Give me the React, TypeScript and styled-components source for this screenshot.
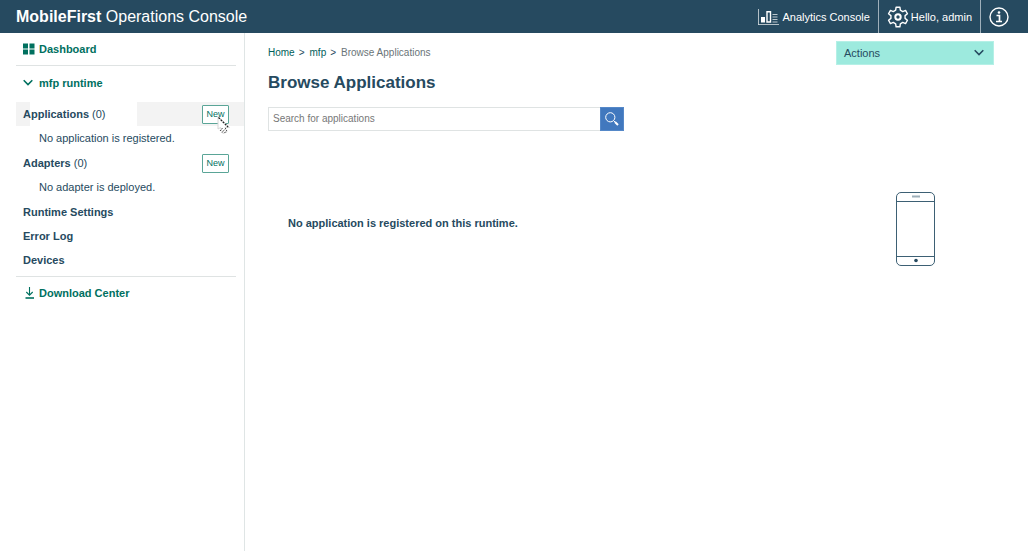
import React from "react";
import styled, { createGlobalStyle } from "styled-components";

const GlobalStyle = createGlobalStyle`
  *, *::before, *::after { box-sizing: border-box; }
  body {
    margin: 0;
    background: #fff;
    color: #264a60;
    font: 11px/16px "Liberation Sans", Arial, sans-serif;
  }
  h1, h2, p, ul, ol { margin: 0; padding: 0; }
  ul, ol { list-style: none; }
  a { color: inherit; text-decoration: none; }
  button, input { font: inherit; }
  svg { display: block; flex: none; }
`;

const Page = styled.div`
  display: flex;
  flex-direction: column;
  min-height: 100vh;
`;

const Header = styled.header`
  display: flex;
  align-items: center;
  height: 33px;
  padding-left: 16px;
  background: #264a60;
  color: #fff;
`;

const Brand = styled.h1`
  flex: 1;
  font-size: 16px;
  line-height: 32px;
  font-weight: 400;
  white-space: nowrap;
`;

const HeaderLink = styled.a<{ $divided?: boolean }>`
  display: flex;
  align-items: center;
  gap: 2px;
  height: 33px;
  padding: 0 8px;
  border-left: ${(p) => (p.$divided ? "1px solid #9fb0bb" : "0")};
  white-space: nowrap;
  &:last-child { padding-right: 19px; }
`;

const Body = styled.div`
  display: flex;
  flex: 1;
`;

const Sidebar = styled.nav`
  flex: none;
  width: 245px;
  padding-left: 16px;
  border-right: 1px solid #dfe5e5;
`;

const Section = styled.a<{ $ruled?: "top" | "bottom" }>`
  display: flex;
  align-items: center;
  gap: 4px;
  height: 33px;
  margin-right: 8px;
  padding-left: 7px;
  border-top: ${(p) => (p.$ruled === "top" ? "1px solid #dfe3e3" : "0")};
  border-bottom: ${(p) => (p.$ruled === "bottom" ? "1px solid #dfe3e3" : "0")};
  color: #00705f;
  font-weight: 700;
`;

const Menu = styled.ul`
  padding: 3px 0 4px;
`;

const MenuRow = styled.li<{ $active?: boolean }>`
  display: flex;
  align-items: center;
  justify-content: space-between;
  height: 24px;
  padding: 0 15px 0 7px;
  background: ${(p) =>
    p.$active
      ? "linear-gradient(90deg, #f3f3f3 14px, #fff 14px 121px, #f3f3f3 121px)"
      : "none"};
`;

const MenuNote = styled.li`
  height: 25px;
  padding-left: 23px;
  line-height: 25px;
`;

const NewSlot = styled.span`
  position: relative;
`;

const NewButton = styled.button`
  display: block;
  width: 27px;
  height: 19px;
  padding: 0;
  border: 1px solid #5aa597;
  border-radius: 1px;
  background: #fff;
  color: #00705f;
  font-size: 9px;
`;

const Pointer = styled.svg`
  position: absolute;
  left: 15px;
  top: 11px;
`;

const Main = styled.main`
  flex: 1;
  min-width: 0;
  padding: 8px 34px 0 23px;
`;

const TopRow = styled.div`
  display: flex;
  justify-content: space-between;
  align-items: center;
`;

const Crumbs = styled.ol`
  display: flex;
  gap: 5px;
  font-size: 10px;
`;

const Crumb = styled.li`
  color: #6a7478;
  a { color: #00605a; }
  span { margin-left: 4px; color: #264a60; }
`;

const Actions = styled.button`
  display: flex;
  align-items: center;
  justify-content: space-between;
  width: 158px;
  height: 24px;
  padding: 0 7px;
  border: 1px solid #b5f0e6;
  background: #9deade;
  color: #264a60;
`;

const Title = styled.h2`
  margin-top: 6px;
  font-size: 17px;
  line-height: 24px;
`;

const Search = styled.form`
  display: flex;
  max-width: 356px;
  height: 24px;
  margin-top: 12px;
`;

const SearchInput = styled.input`
  flex: 1;
  min-width: 0;
  padding: 0 4px;
  border: 1px solid #dfe3e3;
  border-right: 0;
  border-radius: 0;
  font-size: 10px;
  &::placeholder { color: #777; opacity: 1; }
`;

const SearchButton = styled.button`
  display: grid;
  place-items: center;
  width: 24px;
  padding: 0;
  border: 1px solid #5588c8;
  background: #4178be;
`;

const Empty = styled.section`
  display: flex;
  align-items: center;
  justify-content: space-between;
  margin-top: 60px;
  padding: 0 58px 0 20px;
`;

const EmptyText = styled.p`
  padding-bottom: 12px;
  font-weight: 700;
`;

const Chevron = () => (
  <svg width="12" height="12" viewBox="0 0 12 12" fill="none" stroke="currentColor" strokeWidth="1.6" aria-hidden="true">
    <path d="M0.7 3.2 5 7.5l4.300-4.300" />
  </svg>
);

const DashboardIcon = () => (
  <svg width="12" height="12" viewBox="0 0 12 12" fill="currentColor" aria-hidden="true">
    <path d="M0 0.5h5v5H0zM6.5 0.5h5v5h-5zM0 6.5h5v5H0zM6.5 6.5h5v5h-5z" />
  </svg>
);

const DownloadIcon = () => (
  <svg width="12" height="12" viewBox="0 0 12 12" fill="none" stroke="currentColor" aria-hidden="true">
    <path d="M6.500 0v8M3.300 5l3.200 3.200L9.700 5" strokeWidth="1.1" />
    <path d="M2.500 11h8.500" strokeWidth="1.600" />
  </svg>
);

const AnalyticsIcon = () => (
  <svg width="22" height="16" viewBox="0 0 22 16" fill="none" stroke="#fff" aria-hidden="true">
    <path d="M0.5 0v15.5M0 15.5h21" opacity=".65" />
    <path d="M3 8h4v5.500H3z" fill="#fff" stroke="none" />
    <path d="M9 2.700h3.500v10.300H9z" strokeWidth="1.400" />
    <path d="M14.500 5.500h5M14.500 8h5M14.500 10.500h5M14.500 13h5" opacity=".7" />
  </svg>
);

const gear = Array.from({ length: 24 }, (_, i) => {
  const tooth = Math.floor(i / 4);
  const r = i % 4 < 2 ? 10 : 7.2;
  const offset = [-11, 11, 19, 41][i % 4];
  const a = ((tooth * 60 + offset - 90) * Math.PI) / 180;
  return `${(11 + r * Math.cos(a)).toFixed(2)},${(11 + r * Math.sin(a)).toFixed(2)}`;
}).join(" ");

const GearIcon = () => (
  <svg width="22" height="22" viewBox="0 0 22 22" fill="none" stroke="#fff" strokeLinejoin="round" aria-hidden="true">
    <polygon points={gear} strokeWidth="1.4" />
    <circle cx="11" cy="11" r="2.700" strokeWidth="2" />
  </svg>
);

const InfoIcon = () => (
  <svg width="20" height="20" viewBox="0 0 20 20" fill="none" stroke="#fff" aria-hidden="true">
    <circle cx="10" cy="10" r="9" strokeWidth="1.4" />
    <path d="M7.500 8.500H10.500v6M7 14.500h6" strokeWidth="1.700" />
    <circle cx="10" cy="5.500" r="1.300" fill="#fff" stroke="none" />
  </svg>
);

const SearchIcon = () => (
  <svg width="14" height="14" viewBox="0 0 14 14" fill="none" stroke="#fff" aria-hidden="true">
    <circle cx="5.300" cy="5.300" r="4.600" />
    <path d="m8.600 8.600 1.600 1.600" />
    <path d="m10 10 3 3" strokeWidth="2" />
  </svg>
);

const PhoneIcon = () => (
  <svg width="40" height="76" viewBox="0 0 40 76" fill="none" stroke="#3d6074" aria-hidden="true">
    <rect x="0.5" y="1.5" width="38" height="73" rx="4.5" />
    <path d="M0.5 10.5h38M0.5 65.5h38" />
    <path d="M16 5.5h8" stroke="#9dafb9" strokeWidth="2" />
    <circle cx="20" cy="69.5" r="1.8" fill="#264a60" stroke="none" />
  </svg>
);

const PointerIcon = () => (
  <Pointer width="14" height="20" viewBox="0 0 14 20" fill="none" aria-hidden="true">
    <path d="M1 0.500V13l2.500-1.500L6 17.500l4-1.500-2-4.500h4.500z" fill="#fff" stroke="#d6d6d6" />
    <path d="M1.500 1.500 11 11" stroke="#222" strokeWidth="1.300" strokeDasharray="2 1" />
    <path d="m3 15 3-3.500M5 16.500l4-4.500M7.500 17l2.500-3" stroke="#444" strokeDasharray="1.500 .8" />
  </Pointer>
);

export default function App() {
  return (
    <Page>
      <GlobalStyle />
      <Header>
        <Brand><b>MobileFirst</b> Operations Console</Brand>
        <HeaderLink href="#analytics"><AnalyticsIcon />Analytics Console</HeaderLink>
        <HeaderLink href="#account" $divided><GearIcon />Hello, admin</HeaderLink>
        <HeaderLink href="#about" aria-label="About" $divided><InfoIcon /></HeaderLink>
      </Header>
      <Body>
        <Sidebar>
          <Section href="#dashboard" $ruled="bottom"><DashboardIcon />Dashboard</Section>
          <Section href="#runtime"><Chevron />mfp runtime</Section>
          <Menu>
            <MenuRow $active>
              <a href="#applications"><b>Applications</b> (0)</a>
              <NewSlot>
                <NewButton type="button">New</NewButton>
                <PointerIcon />
              </NewSlot>
            </MenuRow>
            <MenuNote>No application is registered.</MenuNote>
            <MenuRow>
              <a href="#adapters"><b>Adapters</b> (0)</a>
              <NewButton type="button">New</NewButton>
            </MenuRow>
            <MenuNote>No adapter is deployed.</MenuNote>
            <MenuRow><a href="#settings"><b>Runtime Settings</b></a></MenuRow>
            <MenuRow><a href="#errors"><b>Error Log</b></a></MenuRow>
            <MenuRow><a href="#devices"><b>Devices</b></a></MenuRow>
          </Menu>
          <Section href="#downloads" $ruled="top"><DownloadIcon />Download Center</Section>
        </Sidebar>
        <Main>
          <TopRow>
            <Crumbs>
              <Crumb><a href="#home">Home</a><span>&gt;</span></Crumb>
              <Crumb><a href="#mfp">mfp</a><span>&gt;</span></Crumb>
              <Crumb aria-current="page">Browse Applications</Crumb>
            </Crumbs>
            <Actions type="button">Actions<Chevron /></Actions>
          </TopRow>
          <Title>Browse Applications</Title>
          <Search role="search">
            <SearchInput type="text" aria-label="Search for applications" placeholder="Search for applications" />
            <SearchButton type="submit" aria-label="Search"><SearchIcon /></SearchButton>
          </Search>
          <Empty>
            <EmptyText>No application is registered on this runtime.</EmptyText>
            <PhoneIcon />
          </Empty>
        </Main>
      </Body>
    </Page>
  );
}
